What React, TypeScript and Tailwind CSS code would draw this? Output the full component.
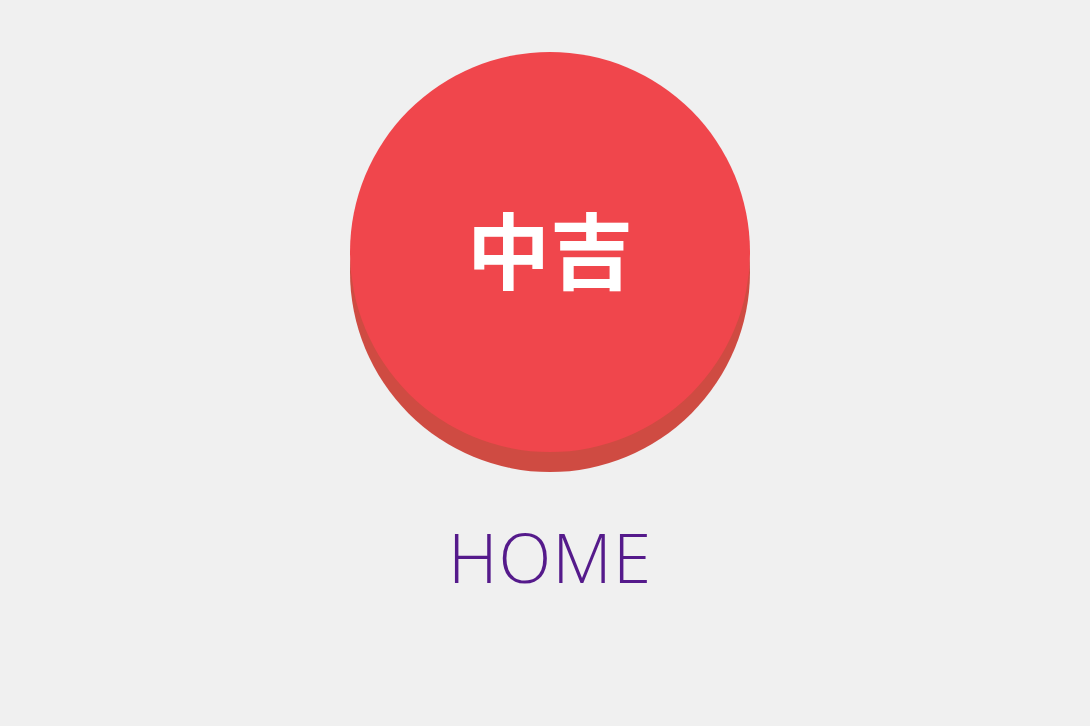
export default function App() {
  return (
    <div className="min-h-[726px] w-full bg-[#f0f0f0] flex flex-col items-center pt-[52px] pl-[10px]">
      <div className="w-[400px] h-[400px] rounded-full bg-[#f0464c] shadow-[0_20px_0_#cf4b42] flex items-center justify-center">
        <span className="text-white font-bold text-[83px] leading-none mb-[10px]" style={{ fontFamily: '"Noto Sans CJK JP", sans-serif' }}>中吉</span>
      </div>
      <a href="#" className="mt-[70px] text-[#551a8b] text-[69px] leading-none font-light tracking-[1px]" style={{ fontFamily: '"Open Sans", sans-serif' }}>HOME</a>
    </div>
  );
}
